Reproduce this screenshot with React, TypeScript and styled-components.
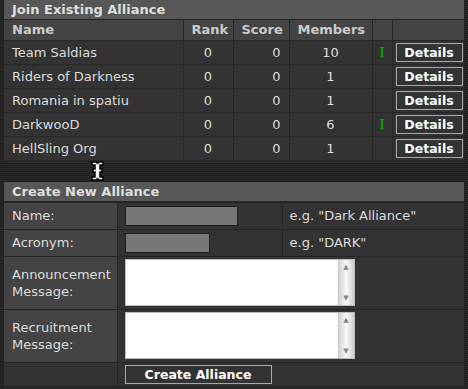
import styled, { createGlobalStyle } from "styled-components";

const GlobalStyle = createGlobalStyle`
  *, *::before, *::after { box-sizing: border-box; }
  html, body {
    margin: 0;
    padding: 0;
    background: repeating-linear-gradient(#2a2a2a 0 1px, #1f1f1f 1px 2px);
    font-family: "DejaVu Sans", Verdana, sans-serif;
    font-size: 13px;
    color: #dcdcdc;
  }
`;

interface Alliance {
  name: string;
  rank: number;
  score: number;
  members: number;
  joined: boolean;
}

const alliances: Alliance[] = [
  { name: "Team Saldias", rank: 0, score: 0, members: 10, joined: true },
  { name: "Riders of Darkness", rank: 0, score: 0, members: 1, joined: false },
  { name: "Romania in spatiu", rank: 0, score: 0, members: 1, joined: false },
  { name: "DarkwooD", rank: 0, score: 0, members: 6, joined: true },
  { name: "HellSling Org", rank: 0, score: 0, members: 1, joined: false },
];

const Page = styled.div`
  position: relative;
  width: 462px;
  margin-left: 3px;
  height: 389px;
`;

const Panel = styled.div`
  background: #333;
  border-left: 1px solid #222;
  border-right: 1px solid #222;
  border-bottom: 1px solid #222;
`;

const Gap = styled.div`
  height: 20px;
`;

const Title = styled.div`
  height: 20px;
  line-height: 19px;
  padding-left: 8px;
  background: #575757;
  color: #dedede;
  font-weight: bold;
  border-bottom: 1px solid #262626;
`;

const Table = styled.table`
  width: 100%;
  border-collapse: collapse;
  table-layout: fixed;
`;

const Th = styled.th<{ $align?: string; $w?: number }>`
  width: ${(p) => (p.$w ? `${p.$w}px` : "auto")};
  height: 20px;
  padding: 0 8px;
  background: #444;
  color: #cacaca;
  font-weight: bold;
  text-align: ${(p) => p.$align || "center"};
  border: 1px solid #262626;
  border-top: none;
  &:first-child { border-left: none; }
  &:last-child { border-right: none; }
`;

const Td = styled.td<{ $align?: string }>`
  height: 24px;
  padding: 0 8px;
  text-align: ${(p) => p.$align || "center"};
  border: 1px solid #262626;
  white-space: nowrap;
  &:first-child { border-left: none; }
  &:last-child { border-right: none; }
`;

const IconCell = styled(Td)`
  padding: 0;
`;

const ButtonCell = styled(Td)`
  padding: 0 2px 0 3px;
`;

const Joined = styled.span`
  color: #0a9a0a;
  font-family: "DejaVu Serif", serif;
  font-weight: bold;
  font-size: 12px;
`;

const Button = styled.button<{ $w: number }>`
  display: block;
  width: ${(p) => p.$w}px;
  height: 19px;
  padding: 0;
  background: #333;
  border: 1px solid #a8a8a8;
  color: #fff;
  font-family: "DejaVu Sans", Verdana, sans-serif;
  font-size: 12.5px;
  font-weight: bold;
`;

const Label = styled.td<{ $h: number; $plain?: boolean }>`
  width: 113px;
  height: ${(p) => p.$h}px;
  padding: 0 8px;
  background: ${(p) => (p.$plain ? "#333" : "#444")};
  line-height: 17px;
  border: 1px solid #262626;
  border-left: none;
`;

const Field = styled.td<{ $w?: number }>`
  width: ${(p) => (p.$w ? `${p.$w}px` : "auto")};
  padding: 0 7px;
  border: 1px solid #262626;
  &:last-child { border-right: none; }
`;

const TextInput = styled.div<{ $w: number }>`
  width: ${(p) => p.$w}px;
  height: 20px;
  background: #777;
  border: 1px solid #1a201a;
`;

const Hint = styled.td`
  padding: 0 7px;
  border: 1px solid #262626;
  border-right: none;
`;

const AreaBox = styled.div`
  display: flex;
  width: 230px;
  height: 47px;
  background: #fff;
  border: 1px solid #bbb;
`;

const Area = styled.textarea`
  flex: 1;
  border: none;
  resize: none;
  outline: none;
  background: #fff;
`;

const Scroll = styled.div`
  width: 16px;
  display: flex;
  flex-direction: column;
  justify-content: space-between;
  align-items: center;
  background: linear-gradient(90deg, #d4d4d4, #f8f8f8 50%, #cdcdcd);
  border-left: 1px solid #c8c8c8;
  color: #888;
  font-size: 7px;
  padding: 3px 0;
`;

const Cursor = styled.svg`
  position: absolute;
  left: 88px;
  top: 161px;
`;

function TextArea() {
  return (
    <AreaBox>
      <Area />
      <Scroll>
        <span>▲</span>
        <span>▼</span>
      </Scroll>
    </AreaBox>
  );
}

export default function App() {
  return (
    <Page>
      <GlobalStyle />
      <Panel>
        <Title>Join Existing Alliance</Title>
        <Table>
          <thead>
            <tr>
              <Th $align="left" $w={179}>Name</Th>
              <Th $w={50}>Rank</Th>
              <Th $w={56}>Score</Th>
              <Th $w={83}>Members</Th>
              <Th $w={20} />
              <Th />
            </tr>
          </thead>
          <tbody>
            {alliances.map((a) => (
              <tr key={a.name}>
                <Td $align="left">{a.name}</Td>
                <Td>{a.rank}</Td>
                <Td $align="right">{a.score}</Td>
                <Td>{a.members}</Td>
                <IconCell>{a.joined && <Joined>I</Joined>}</IconCell>
                <ButtonCell>
                  <Button $w={67}>Details</Button>
                </ButtonCell>
              </tr>
            ))}
          </tbody>
        </Table>
      </Panel>
      <Gap />
      <Panel>
        <Title>Create New Alliance</Title>
        <Table>
          <tbody>
            <tr>
              <Label $h={27}>Name:</Label>
              <Field $w={165}>
                <TextInput $w={113} />
              </Field>
              <Hint>e.g. "Dark Alliance"</Hint>
            </tr>
            <tr>
              <Label $h={27}>Acronym:</Label>
              <Field $w={165}>
                <TextInput $w={85} />
              </Field>
              <Hint>e.g. "DARK"</Hint>
            </tr>
            <tr>
              <Label $h={53}>
                Announcement
                <br />
                Message:
              </Label>
              <Field colSpan={2}>
                <TextArea />
              </Field>
            </tr>
            <tr>
              <Label $h={53}>
                Recruitment
                <br />
                Message:
              </Label>
              <Field colSpan={2}>
                <TextArea />
              </Field>
            </tr>
            <tr>
              <Label $h={24} $plain />
              <Field colSpan={2}>
                <Button $w={147}>Create Alliance</Button>
              </Field>
            </tr>
          </tbody>
        </Table>
      </Panel>
      <Cursor width="13" height="20" viewBox="0 0 13 20">
        <path
          d="M1 1h4l1.5 1.5L8 1h4v3H9v4h2v3H9v5h3v3H8l-1.5-1.5L5 19H1v-3h3v-5H2V8h2V4H1z"
          fill="#fff"
          stroke="#000"
          strokeWidth="1.5"
        />
      </Cursor>
    </Page>
  );
}
